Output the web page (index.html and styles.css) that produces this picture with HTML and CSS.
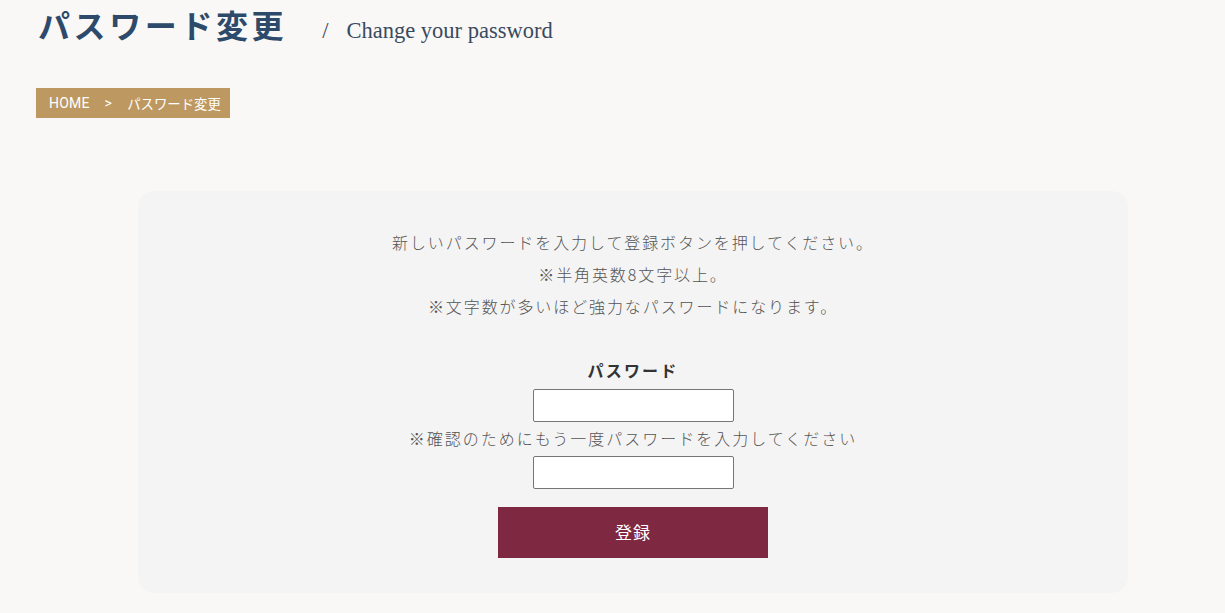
FILE: index.html
```html
<!DOCTYPE html>
<html lang="ja">
<head>
<meta charset="utf-8">
<title>パスワード変更</title>
<link rel="stylesheet" href="styles.css">
</head>
<body>
<div class="page">
  <header class="page-header">
    <h1 class="page-title">パスワード変更</h1>
    <span class="page-sep">/</span>
    <span class="page-sub">Change your password</span>
  </header>
  <nav class="breadcrumb">
    <span class="crumb">HOME</span>
    <span class="crumb-sep">&gt;</span>
    <span class="crumb crumb-current">パスワード変更</span>
  </nav>
  <section class="card">
    <p class="intro">新しいパスワードを入力して登録ボタンを押してください。<br>※半角英数8文字以上。<br>※文字数が多いほど強力なパスワードになります。</p>
    <form class="form">
      <label class="label">パスワード</label>
      <input class="field" type="password">
      <p class="note">※確認のためにもう一度パスワードを入力してください</p>
      <input class="field field-2" type="password">
      <button class="submit" type="button">登録</button>
    </form>
  </section>
</div>
</body>
</html>
```
FILE: styles.css
```css
html, body {
  margin: 0;
  padding: 0;
  background: #f9f8f6;
}
body {
  font-family: "Noto Sans CJK JP", "Noto Sans", sans-serif;
  color: #555;
}
.page {
  padding: 0 36px;
}
.page-header {
  display: flex;
  align-items: baseline;
  padding-left: 2px;
  height: 48px;
}
.page-title {
  margin: 0;
  font-size: 32px;
  line-height: 48px;
  font-weight: 700;
  letter-spacing: 3.6px;
  color: #2d4a6a;
}
.page-sep {
  font-family: "Liberation Serif", serif;
  font-size: 22.5px;
  color: #3a4a5e;
  margin-left: 35px;
}
.page-sub {
  font-family: "Liberation Serif", serif;
  font-size: 22.5px;
  color: #3a4a5e;
  margin-left: 18px;
}
.breadcrumb {
  display: inline-flex;
  align-items: center;
  margin-top: 40px;
  height: 30px;
  padding: 0 9px 0 13px;
  background: #bd9860;
  color: #fff;
  font-family: Roboto, "Noto Sans CJK JP", sans-serif;
  font-size: 14px;
  letter-spacing: 0.2px;
}
.crumb-current {
  font-size: 13.4px;
  letter-spacing: 0;
}
.crumb-sep {
  margin: 0 15px 0 15px;
}
.card {
  width: 990px;
  margin: 73px 0 0 102px;
  background: #f4f4f4;
  border-radius: 16px;
  padding: 35px 0 35px;
  text-align: center;
}
.intro {
  margin: 0;
  font-size: 16px;
  line-height: 32px;
  font-weight: 300;
  letter-spacing: 1.9px;
  color: #555;
}
.form {
  margin-top: 32px;
  display: flex;
  flex-direction: column;
  align-items: center;
}
.label {
  font-size: 16px;
  line-height: 32px;
  font-weight: 700;
  color: #333;
  letter-spacing: 2.2px;
}
.field {
  box-sizing: border-box;
  width: 201px;
  height: 33px;
  margin-top: 3px;
  border: 1px solid #767676;
  border-radius: 2px;
  background: #fff;
}
.note {
  margin: 0;
  font-size: 16px;
  line-height: 32px;
  font-weight: 300;
  letter-spacing: 2px;
  color: #555;
}
.field-2 {
  margin-top: 2px;
}
.submit {
  margin-top: 18px;
  width: 270px;
  height: 51px;
  border: 0;
  background: #7f2841;
  color: #fff;
  font-family: "Noto Sans CJK JP", sans-serif;
  font-size: 17px;
  letter-spacing: 1px;
  padding: 0 0 3px;
}
```
